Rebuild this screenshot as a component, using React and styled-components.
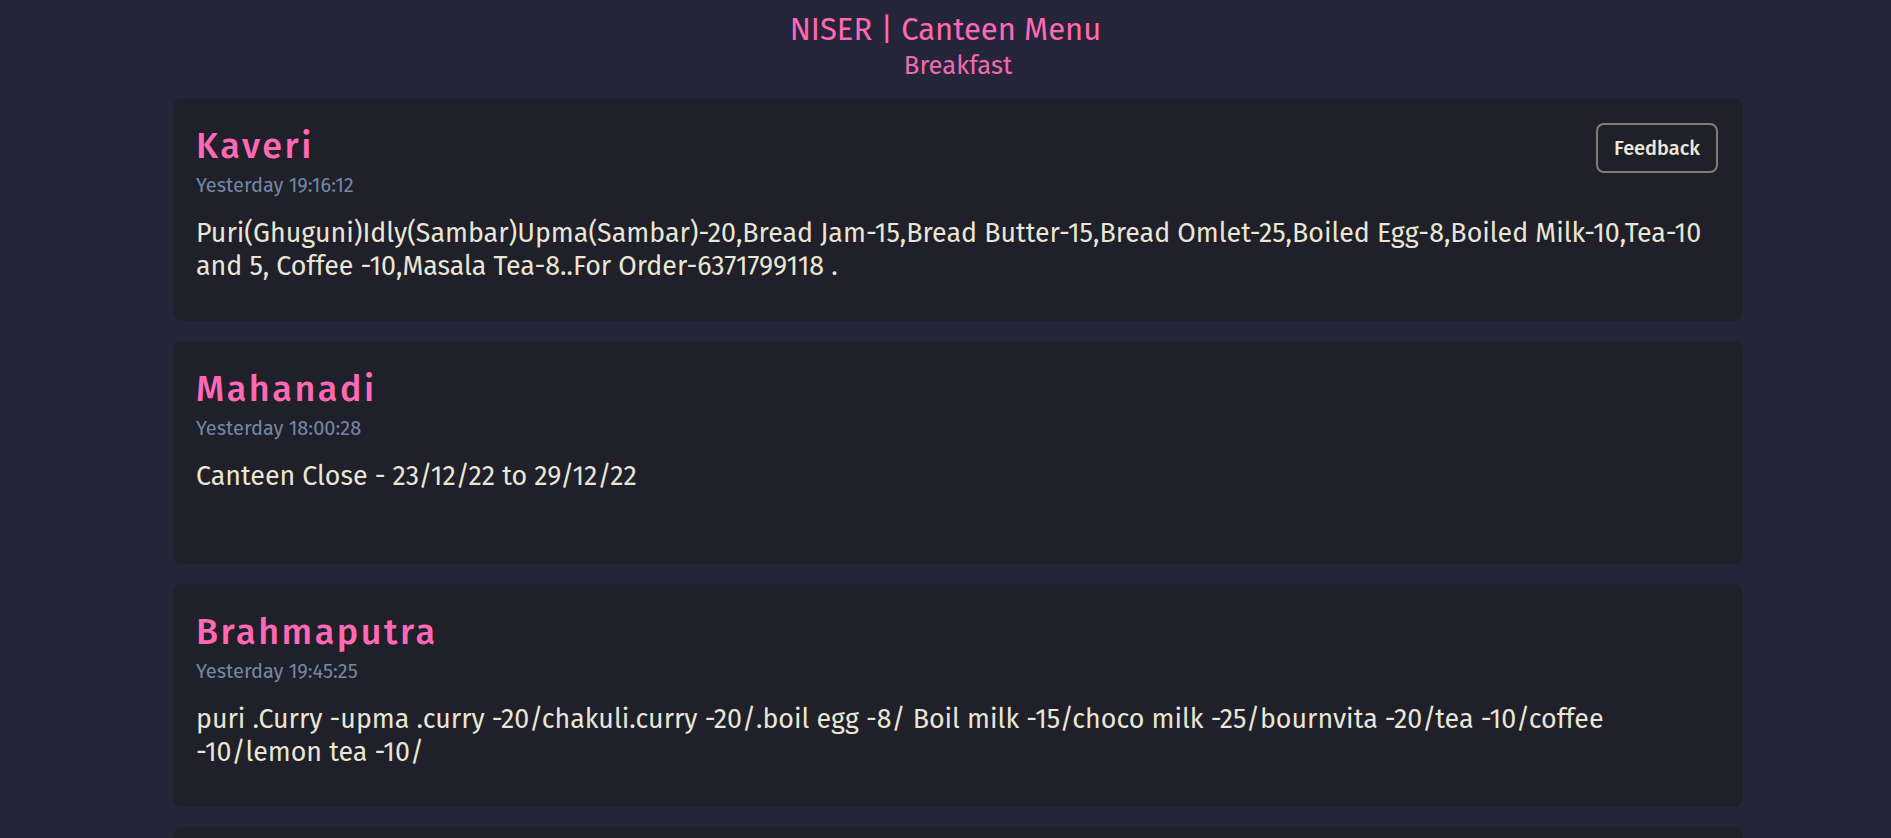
import React from "react";
import styled, { createGlobalStyle } from "styled-components";

const GlobalStyle = createGlobalStyle`
  html, body {
    margin: 0;
    padding: 0;
    background-color: #25253a;
  }
  body {
    font-family: "Fira Sans", "Open Sans", "Noto Sans", sans-serif;
    color: #e9e6d6;
  }
  * {
    box-sizing: border-box;
  }
`;

const Page = styled.div`
  min-height: 100vh;
  padding: 8px 0 40px;
`;

const Header = styled.header`
  text-align: center;
`;

const SiteTitle = styled.h1`
  margin: 0;
  font-size: 31px;
  font-weight: 400;
  line-height: 44px;
  color: #ff69b4;
`;

const Main = styled.main`
  width: 1570px;
  margin-left: 173px;
  display: flex;
  flex-direction: column;
  gap: 20px;
`;

const MealLabel = styled.h2`
  margin: 0 0 -2px;
  text-align: center;
  font-size: 25.6px;
  font-weight: 400;
  line-height: 28px;
  color: #f06aae;
`;

const Card = styled.section`
  background-color: #1f2029;
  border-radius: 9px;
  min-height: 223px;
  padding: 25px 25px 24px 23px;
`;

const CardHead = styled.div`
  display: flex;
  justify-content: space-between;
  align-items: flex-start;
`;

const Canteen = styled.h3`
  margin: 0;
  font-size: 36px;
  font-weight: 500;
  letter-spacing: 2.5px;
  line-height: 46px;
  color: #ff69b4;
`;

const Stamp = styled.div`
  margin-top: 4px;
  font-size: 20px;
  line-height: 24px;
  color: #7388a6;
`;

const Menu = styled.p`
  margin: 20px 0 0;
  font-size: 26.8px;
  line-height: 33px;
  color: #e9e6d6;
`;

const Line = styled.span`
  display: block;
`;

const FeedbackButton = styled.button`
  width: 122px;
  height: 50px;
  border: 2px solid #827c73;
  border-radius: 8px;
  background: transparent;
  color: #ebe8da;
  font-family: inherit;
  font-size: 20px;
  font-weight: 500;
  cursor: pointer;
`;

const entries = [
  {
    name: "Kaveri",
    time: "Yesterday 19:16:12",
    lines: [
      "Puri(Ghuguni)Idly(Sambar)Upma(Sambar)-20,Bread Jam-15,Bread Butter-15,Bread Omlet-25,Boiled Egg-8,Boiled Milk-10,Tea-10",
      "and 5, Coffee -10,Masala Tea-8..For Order-6371799118 .",
    ],
    feedback: true,
  },
  {
    name: "Mahanadi",
    time: "Yesterday 18:00:28",
    lines: ["Canteen Close - 23/12/22 to 29/12/22"],
  },
  {
    name: "Brahmaputra",
    time: "Yesterday 19:45:25",
    lines: [
      "puri .Curry -upma .curry -20/chakuli.curry -20/.boil egg -8/ Boil milk -15/choco milk -25/bournvita -20/tea -10/coffee",
      "-10/lemon tea -10/",
    ],
  },
];

export default function App() {
  return (
    <>
      <GlobalStyle />
      <Page>
        <Header>
          <SiteTitle>NISER | Canteen Menu</SiteTitle>
        </Header>
        <Main>
          <MealLabel>Breakfast</MealLabel>
          {entries.map((e) => (
            <Card key={e.name}>
              <CardHead>
                <div>
                  <Canteen>{e.name}</Canteen>
                  <Stamp>{e.time}</Stamp>
                </div>
                {e.feedback && <FeedbackButton>Feedback</FeedbackButton>}
              </CardHead>
              <Menu>
                {e.lines.map((l, i) => (
                  <Line key={i}>{l}</Line>
                ))}
              </Menu>
            </Card>
          ))}
          <Card />
        </Main>
      </Page>
    </>
  );
}
